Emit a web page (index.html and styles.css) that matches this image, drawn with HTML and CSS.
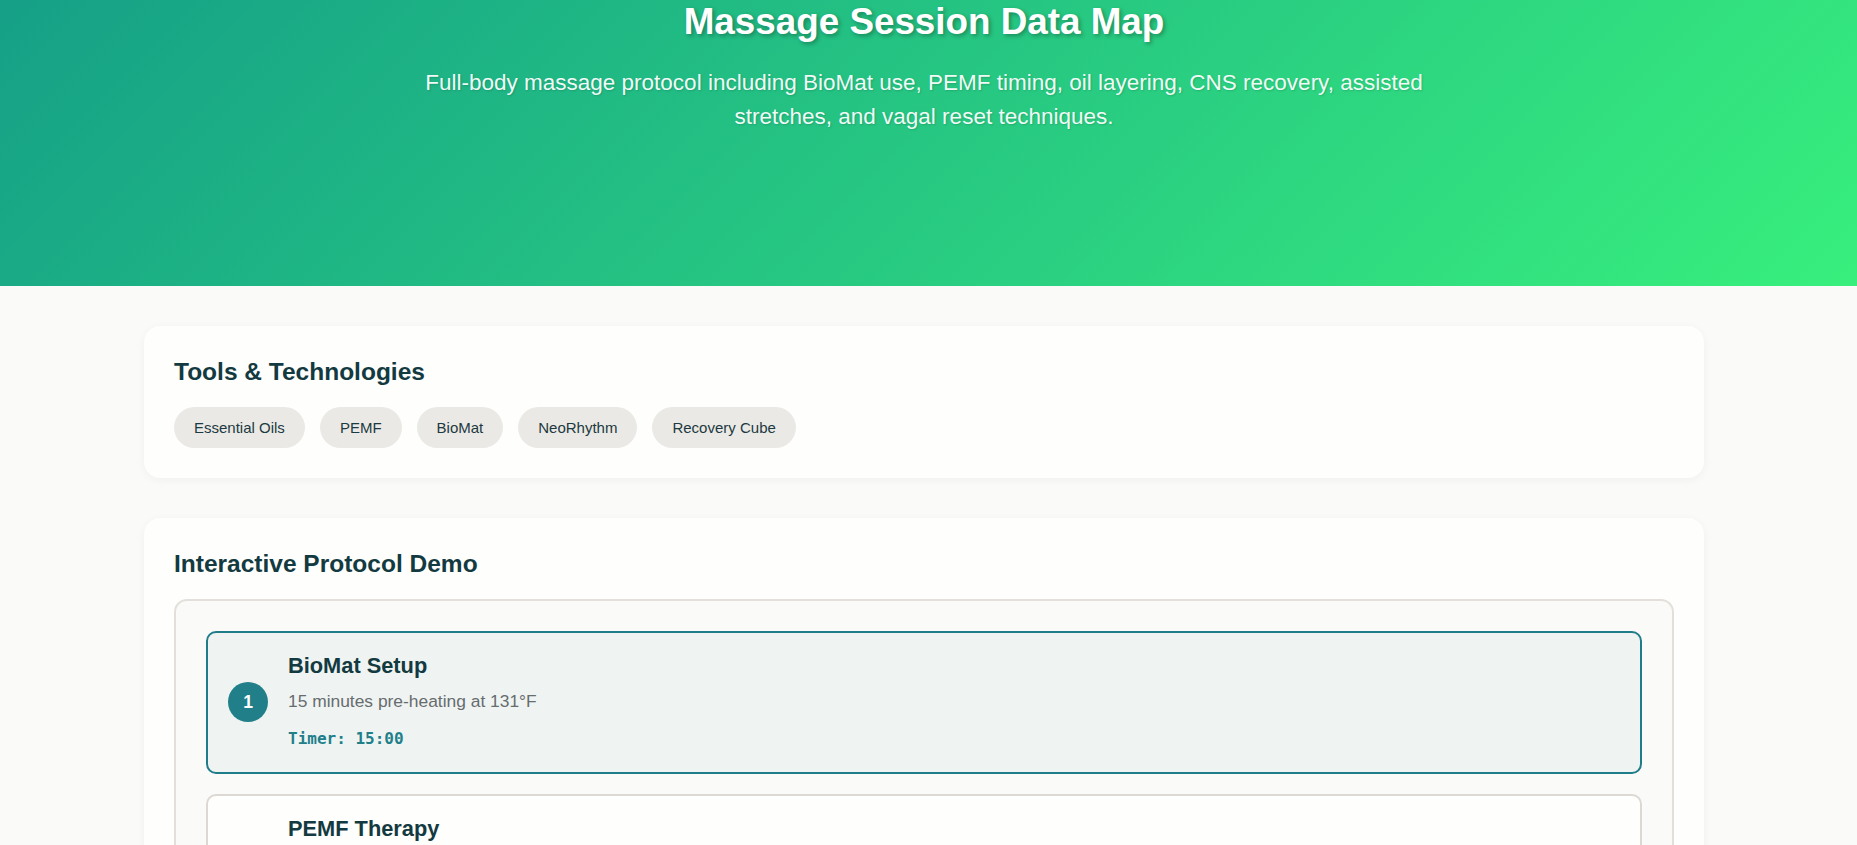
FILE: index.html
```html
<!DOCTYPE html>
<html lang="en">
<head>
<meta charset="utf-8">
<title>Massage Session Data Map</title>
<link rel="stylesheet" href="styles.css">
</head>
<body>
<header class="hero">
  <div class="hero-inner">
    <h1 class="hero-title">Massage Session Data Map</h1>
    <p class="hero-sub">Full-body massage protocol including BioMat use, PEMF timing, oil layering, CNS recovery, assisted stretches, and vagal reset techniques.</p>
  </div>
</header>
<main class="main">
  <div class="container">
    <section class="card">
      <h2 class="card-title">Tools &amp; Technologies</h2>
      <div class="chips">
        <span class="chip">Essential Oils</span>
        <span class="chip">PEMF</span>
        <span class="chip">BioMat</span>
        <span class="chip">NeoRhythm</span>
        <span class="chip">Recovery Cube</span>
      </div>
    </section>
    <section class="card">
      <h2 class="card-title">Interactive Protocol Demo</h2>
      <div class="demo">
        <div class="step step-active">
          <div class="step-num">1</div>
          <div class="step-body">
            <h3 class="step-title">BioMat Setup</h3>
            <p class="step-desc">15 minutes pre-heating at 131°F</p>
            <div class="step-timer">Timer: 15:00</div>
          </div>
        </div>
        <div class="step">
          <div class="step-num">2</div>
          <div class="step-body">
            <h3 class="step-title">PEMF Therapy</h3>
            <p class="step-desc">20 minutes low-frequency pulsed field session</p>
            <div class="step-timer">Timer: 20:00</div>
          </div>
        </div>
        <div class="step">
          <div class="step-num">3</div>
          <div class="step-body">
            <h3 class="step-title">Oil Layering</h3>
            <p class="step-desc">Apply essential oils in sequence along the spine</p>
            <div class="step-timer">Timer: 10:00</div>
          </div>
        </div>
      </div>
    </section>
  </div>
</main>
</body>
</html>
```

FILE: styles.css
```css
* {
  box-sizing: border-box;
}

html, body {
  margin: 0;
  padding: 0;
}

body {
  background: #fafaf8;
  font-family: "Liberation Sans", Arial, sans-serif;
  color: #1c3a3f;
}

.hero {
  height: 286px;
  padding: 0 9px 0 0;
  background: linear-gradient(135deg, #15a087 0%, #38ef7d 100%);
  color: #ffffff;
  text-align: center;
}

.hero-inner {
  display: flex;
  flex-direction: column;
  align-items: center;
}

.hero-title {
  margin: 0 0 21.6px;
  font-size: 36.8px;
  line-height: 1.2;
  font-weight: 700;
  text-shadow: 2px 2px 4px rgba(0, 0, 0, 0.3);
}

.hero-sub {
  margin: 0;
  max-width: 1050px;
  font-size: 22.5px;
  line-height: 1.53;
  color: rgba(255, 255, 255, 0.95);
  text-shadow: 1px 1px 2px rgba(0, 0, 0, 0.15);
}

.main {
  padding: 40px 9px 40px 0;
}

.container {
  max-width: 1600px;
  margin: 0 auto;
  padding: 0 20px;
  display: flex;
  flex-direction: column;
  gap: 40px;
}

.card {
  background: #fefefd;
  border-radius: 16px;
  padding: 31px 30px 30px;
  box-shadow: 0 2px 10px rgba(0, 0, 0, 0.045);
}

.card-title {
  margin: 0 0 20px;
  font-size: 24.5px;
  line-height: 30px;
  font-weight: 700;
  color: #133a40;
}

.chips {
  display: flex;
  flex-wrap: wrap;
  gap: 15px;
}

.chip {
  display: inline-block;
  padding: 12px 20px;
  border-radius: 999px;
  background: #ebe9e6;
  color: #1c3a40;
  font-size: 15px;
  line-height: 17.25px;
}

.demo {
  border: 2px solid #e3e0db;
  border-radius: 13px;
  background: #fafaf8;
  padding: 30px;
  display: flex;
  flex-direction: column;
  gap: 20px;
}

.step {
  display: flex;
  align-items: center;
  gap: 20px;
  padding: 20px;
  border: 2px solid #dcd8d3;
  border-radius: 10px;
  background: #fefefd;
}

.step-active {
  border-color: #1f7d89;
  background: #eff4f2;
}

.step-num {
  flex: none;
  width: 40px;
  height: 40px;
  border-radius: 50%;
  background: #217f8a;
  color: #ffffff;
  font-weight: 700;
  font-size: 17.5px;
  display: flex;
  align-items: center;
  justify-content: center;
}

.step-body {
  display: flex;
  flex-direction: column;
}

.step-title {
  margin: 0 0 10px;
  font-size: 21.8px;
  line-height: 25px;
  font-weight: 700;
  color: #133a40;
}

.step-desc {
  margin: 0 0 10px;
  font-size: 17.4px;
  line-height: 1.6;
  color: #676c6f;
}

.step-timer {
  font-family: "DejaVu Sans Mono", monospace;
  font-size: 16px;
  line-height: 1.6;
  font-weight: 700;
  color: #217f8a;
}
```
